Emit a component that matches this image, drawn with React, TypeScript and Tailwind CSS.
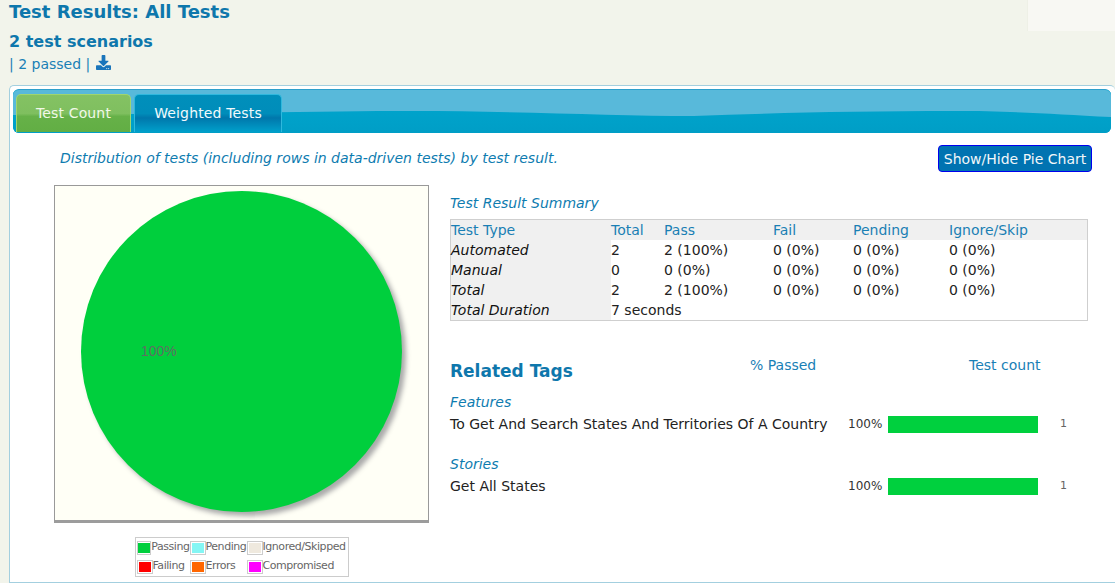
import { FaDownload } from "react-icons/fa";

const rows = [
  ["Automated", "2", "2 (100%)"],
  ["Manual", "0", "0 (0%)"],
  ["Total", "2", "2 (100%)"],
];

const legend = [
  ["bg-[#00cf3d]", "Passing", "w-[32px]"],
  ["bg-[#84f6f4]", "Pending", "w-[32px]"],
  ["bg-[#efe9de]", "Ignored/Skipped", "w-[86px]"],
  ["bg-[#ff0000]", "Failing", "w-[32px]"],
  ["bg-[#ff6600]", "Errors", "w-[32px]"],
  ["bg-[#ff00ff]", "Compromised", "w-[86px]"],
];

function Tag({ heading, name }: { heading: string; name: string }) {
  return (
    <div className="h-[62px]">
      <div className="h-[22px] text-[14px] leading-[22px] italic text-[#0e7cb0]">{heading}</div>
      <div className="flex h-[22px] items-center leading-[22px]">
        <div className="w-[398px] text-[14px] text-[#222]">{name}</div>
        <div className="w-[40px] text-[12px] text-[#333]">100%</div>
        <div className="h-[17px] w-[150px] bg-[#00d03e]" />
        <div className="ml-[22px] text-[11px] text-[#666]">1</div>
      </div>
    </div>
  );
}

export default function App() {
  return (
    <div className="h-[583px] overflow-hidden bg-[#f2f4eb] font-['DejaVu_Sans',Verdana,sans-serif]">
      <div className="flex h-[85px] justify-between pl-[9px]">
        <div>
          <h1 className="h-[25px] text-[18px] leading-[24px] font-bold text-[#0e77ac]">Test Results: All Tests</h1>
          <h2 className="mt-[6px] h-[22px] text-[16px] leading-[22px] font-bold text-[#0e77ac]">2 test scenarios</h2>
          <div className="flex h-[22px] items-center text-[14px] text-[#1a80b6]">
            <span>| 2 passed |</span>
            <FaDownload className="ml-[6px] mb-[3px] text-[15px] text-[#1a75bb]" />
          </div>
        </div>
        <div className="h-[31px] w-[88px] border-l border-[#eef0e6] bg-[#f8f8f3]" />
      </div>

      <div className="ml-[9px] h-[498px] rounded-t-[5px] border border-r-0 border-[#a3cfdf] bg-white pt-[3px] pl-[3px] pr-[4px]">
        <div className="relative flex h-[44px] gap-[3px] overflow-hidden rounded-[6px] border-t border-[#2d9fcb] bg-[#00a3cb] pl-[3px] pt-[4px]">
          <svg className="absolute inset-0 h-full w-full" viewBox="0 0 1097 43" preserveAspectRatio="none">
            <defs>
              <linearGradient id="bar" x1="0" y1="0" x2="0" y2="1">
                <stop offset="0" stopColor="#00a7cf" />
                <stop offset="1" stopColor="#009ec6" />
              </linearGradient>
            </defs>
            <rect width="1097" height="43" fill="url(#bar)" />
            <path d="M0 0H1097V27C1040 24 1000 21 940 21C840 21 760 23 680 26C600 26 500 21 400 21C300 21 180 24 0 25Z" fill="#58b9da" />
          </svg>
          <div className="relative flex h-[38px] w-[115px] items-center justify-center rounded-t-[5px] border border-b-0 border-[#9fd56f] bg-[linear-gradient(#84c263_0%,#7fbf5f_50%,#66b148_58%,#62ae44_100%)] text-[14px] tracking-[0.15px] text-[#f1f8e8]">
            Test Count
          </div>
          <div className="relative flex h-[38px] w-[148px] items-center justify-center rounded-t-[5px] border border-b-0 border-[#2fb8dd] bg-[linear-gradient(#008fbb_0%,#008dba_50%,#0077ab_62%,#00a0cb_100%)] text-[14px] tracking-[0.15px] text-[#f2f9fc]">
            Weighted Tests
          </div>
        </div>

        <div className="flex h-[52px] items-center justify-between pl-[47px] pr-[19px] pb-[1px]">
          <div className="text-[14px] italic text-[#0e7cb0]">
            Distribution of tests (including rows in data-driven tests) by test result.
          </div>
          <button className="h-[27px] w-[154px] rounded-[4px] border border-[#0000ee] bg-[#0073b1] text-[14px] leading-none text-[#f2f7fa]">
            Show/Hide Pie Chart
          </button>
        </div>

        <div className="flex">
          <div className="ml-[41px] w-[375px]">
            <div className="flex h-[338px] w-[375px] items-center justify-center border border-b-[3px] border-[#999] border-b-[#9c9c9c] bg-[#fffff6] pb-[3px]">
              <div className="flex h-[321px] w-[321px] items-center rounded-full bg-[#00cf3d] pl-[60px] shadow-[4px_4px_5px_#aaa]">
                <span className="font-['Liberation_Sans',sans-serif] text-[14px] text-[#5f6f63]">100%</span>
              </div>
            </div>
            <div className="mx-auto mt-[14px] w-[214px] border border-[#ccc] pl-[1px]">
              <div className="grid grid-cols-[53px_57px_1fr] text-[11px] text-[#666]">
                {legend.map(([c, l]) => (
                  <div key={l} className="flex h-[19px] items-center last:h-[19px]">
                    <div className="flex h-[14px] w-[16px] items-center justify-center border border-[#ccc] bg-white">
                      <div className={`h-[10px] w-[12px] ${c}`} />
                    </div>
                    <span className="tracking-[-0.45px] whitespace-nowrap">{l}</span>
                  </div>
                ))}
              </div>
            </div>
          </div>

          <div className="ml-[21px] w-[638px]">
            <div className="mt-[8px] h-[26px] text-[14px] leading-[20px] italic text-[#0e7cb0]">Test Result Summary</div>
            <div className="h-[102px] w-[638px] border border-[#cfcfcf] text-[14px] leading-[20px] text-[#222]">
              <div className="grid h-[20px] grid-cols-[160px_53px_109px_80px_96px_1fr] bg-[#f0f0f0] text-[#1a7fb4]">
                {["Test Type", "Total", "Pass", "Fail", "Pending", "Ignore/Skip"].map((h) => (
                  <div key={h}>{h}</div>
                ))}
              </div>
              {rows.map(([a, b, c]) => (
                <div key={a} className="grid h-[20px] grid-cols-[160px_53px_109px_80px_96px_1fr]">
                  <div className="bg-[#f0f0f0] italic text-[#111]">{a}</div>
                  <div>{b}</div>
                  <div>{c}</div>
                  <div>0 (0%)</div>
                  <div>0 (0%)</div>
                  <div>0 (0%)</div>
                </div>
              ))}
              <div className="grid h-[20px] grid-cols-[160px_1fr]">
                <div className="bg-[#f0f0f0] italic text-[#111]">Total Duration</div>
                <div>7 seconds</div>
              </div>
            </div>

            <div className="mt-[26px] flex h-[44px] items-start">
              <h3 className="mt-[12px] w-[300px] text-[17px] leading-[24px] font-bold text-[#0e77ac]">Related Tags</h3>
              <div className="w-[219px] text-[14px] leading-[36px] text-[#1a80b6]">% Passed</div>
              <div className="text-[14px] leading-[36px] text-[#1a80b6]">Test count</div>
            </div>
            <Tag heading="Features" name="To Get And Search States And Territories Of A Country" />
            <Tag heading="Stories" name="Get All States" />
          </div>
        </div>
      </div>
    </div>
  );
}
